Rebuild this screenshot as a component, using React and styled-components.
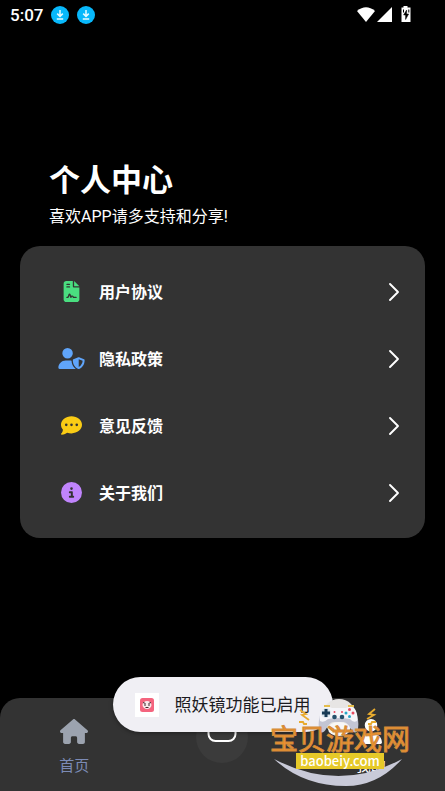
import styled, { createGlobalStyle } from "styled-components";
import {
  FaFileContract,
  FaUserShield,
  FaCommentDots,
  FaCircleInfo,
  FaHouse,
  FaUser,
} from "react-icons/fa6";

const items = [
  { label: "用户协议", icon: FaFileContract, color: "#4ade80" },
  { label: "隐私政策", icon: FaUserShield, color: "#60a5fa" },
  { label: "意见反馈", icon: FaCommentDots, color: "#facc15" },
  { label: "关于我们", icon: FaCircleInfo, color: "#c084fc" },
];

function DownloadIcon() {
  return (
    <svg width="18" height="18" viewBox="0 0 18 18">
      <circle cx="9" cy="9" r="9" fill="#08b8fb" />
      <path
        d="M9 4v6M6.2 7.6L9 10.4l2.8-2.8M5.8 13h6.4"
        fill="none"
        stroke="#e8faff"
        strokeWidth="1.5"
      />
    </svg>
  );
}

function StatusBar() {
  return (
    <Status>
      <div className="status__left">
        <span>5:07</span>
        <DownloadIcon />
        <DownloadIcon />
      </div>
      <svg width="54" height="18" viewBox="0 0 54 18">
        <g fill="white">
          <path d="M0 5Q9 -2.5 18 5L9 16z" />
          <path d="M35 1v15H20z" />
          <path d="M46.500 0h4v1.500h3V16h-9V1.500h2z" />
        </g>
        <path
          d="M49.600 4l-3 5h2v4.500l3-5.500h-2z"
          fill="black"
          stroke="black"
          strokeWidth="0.500"
        />
        <path d="M46.500 3.500v3M51.800 3.500v3" stroke="black" strokeWidth="1" />
      </svg>
    </Status>
  );
}

function Watermark() {
  return (
    <Mark aria-hidden="true">
      <svg width="140" height="90" viewBox="0 0 140 90">
        <circle cx="69" cy="19" r="17" fill="#e7e5e4" />
        <path
          d="M52 13C49 19 48 26 49 32C50 37 54 36 56 32Q59 26 63 25H74Q78 26 81 32C84 37 87 36 88 32C89 26 88 19 85 13z"
          fill="#c3c5d3"
        />
        <path
          d="M53 11Q57 8 62 11H76Q80 8 84 11C87 14 88 20 87 24Q83 26 80 22Q69 20 58 22Q54 26 50 24C49 20 50 14 53 11z"
          fill="#f5f5f9"
        />
        <ellipse cx="69" cy="32" rx="11" ry="7" fill="#f8f7f7" />
        <path d="M54 9h6M78 9h6" stroke="#e4bd4d" strokeWidth="2" />
        <circle cx="56" cy="16" r="5" fill="#d9e5ed" />
        <path d="M56 12v8M52 16h8" stroke="#173b55" strokeWidth="3" />
        <g fill="#24506b">
          <circle cx="64.500" cy="20" r="2.300" />
          <circle cx="72" cy="20" r="2.300" />
        </g>
        <g fill="#e74b61">
          <circle cx="64.500" cy="15" r="1" />
          <circle cx="72" cy="15" r="1" />
          <circle cx="83" cy="16" r="1.500" />
          <circle cx="79.500" cy="12.500" r="1.500" />
        </g>
        <g fill="#25a7c7">
          <circle cx="76" cy="16" r="1.500" />
          <circle cx="79.500" cy="19.500" r="1.500" />
        </g>
        <g fill="none" stroke="#e8ab2e" strokeWidth="1.800">
          <path d="M30 13l6 4-4 1 7 5M105 12l-6 5 5 1-7 4" />
          <path d="M29 25h4l1 2h3M106 25h-4l-1 2h-3" />
        </g>
        <path d="M4 62Q69 96 132 62Q108 89 76 89Q33 89 4 62z" fill="#c9cad8" />
      </svg>
      <MarkName>宝贝游戏网</MarkName>
      <MarkSite>baobeiy.com</MarkSite>
    </Mark>
  );
}

export default function App() {
  return (
    <>
      <GlobalStyle />
      <Page>
        <StatusBar />
        <Header>
          <h1>个人中心</h1>
          <p>喜欢APP请多支持和分享!</p>
        </Header>
        <Card>
          {items.map(({ label, icon: Icon, color }) => (
            <Row key={label} type="button">
              <RowIcon $color={color}>
                <Icon />
              </RowIcon>
              <span>{label}</span>
              <svg width="12" height="20" viewBox="0 0 12 20">
                <path
                  d="M2 2l8 8-8 8"
                  fill="none"
                  stroke="white"
                  strokeWidth="1.900"
                  strokeLinecap="round"
                  strokeLinejoin="round"
                />
              </svg>
            </Row>
          ))}
        </Card>
        <Tabs>
          <Tab href="#home" $color="#7c8bb5" $icon="#9ca3af">
            <FaHouse />
            <span>首页</span>
          </Tab>
          <Scan type="button" aria-label="scan">
            <svg width="30" height="30" viewBox="0 0 30 30">
              <rect
                x="1.500"
                y="2"
                width="27"
                height="17"
                rx="7"
                fill="none"
                stroke="white"
                strokeWidth="2"
              />
            </svg>
          </Scan>
          <Tab href="#mine" $color="white" $icon="white">
            <FaUser />
            <span>我的</span>
          </Tab>
        </Tabs>
        <Toast role="status">
          <svg width="24" height="24" viewBox="0 0 24 24">
            <path d="M0 0h24v24H0z" fill="white" />
            <rect x="5" y="5" width="14" height="14" rx="2.500" fill="#f4647e" />
            <ellipse cx="12" cy="12" rx="4.500" ry="4" fill="#f9e9ea" />
            <path
              d="M8 9.500l2.500 1M16 9.500l-2.500 1M9 12h2M13 12h2M10.500 14.500h3"
              stroke="#40272d"
              strokeWidth="1"
            />
          </svg>
          <span>照妖镜功能已启用</span>
        </Toast>
        <Watermark />
      </Page>
    </>
  );
}

const GlobalStyle = createGlobalStyle`
  * {
    box-sizing: border-box;
    margin: 0;
    padding: 0;
  }
  body {
    background-color: black;
    font-family: "Noto Sans CJK SC", sans-serif;
  }
  button {
    border: none;
    font: inherit;
    cursor: pointer;
  }
  svg {
    display: block;
    flex-shrink: 0;
  }
`;

const Page = styled.div`
  position: relative;
  display: flex;
  flex-direction: column;
  min-height: 100vh;
  color: white;
`;

const Status = styled.div`
  display: flex;
  justify-content: space-between;
  align-items: center;
  height: 30px;
  padding: 0 34px 0 10px;
  .status__left {
    display: flex;
    align-items: center;
    gap: 8px;
    font: 500 17px Roboto, sans-serif;
  }
`;

const Header = styled.header`
  padding: 126px 49px 15px;
  h1 {
    margin-bottom: 3px;
    font-size: 31px;
    line-height: 44px;
  }
  p {
    font-family: Roboto, "Noto Sans CJK SC", sans-serif;
    font-size: 16px;
    line-height: 28px;
  }
`;

const Card = styled.main`
  display: flex;
  flex-direction: column;
  margin: 0 20px 24px;
  padding: 12px 0;
  border-radius: 20px;
  background-color: #333333;
`;

const Row = styled.button`
  display: flex;
  align-items: center;
  gap: 12px;
  height: 67px;
  padding: 0 25px 0 36px;
  background: none;
  color: white;
  font-size: 16px;
  font-weight: 700;
  text-align: left;
  span {
    flex: 1;
    padding-bottom: 1px;
  }
`;

const RowIcon = styled.div`
  display: flex;
  justify-content: center;
  width: 31px;
  color: ${(props) => props.$color};
  svg {
    width: 27px;
    height: 21px;
  }
`;

const Tabs = styled.nav`
  display: grid;
  grid-template-columns: repeat(3, 1fr);
  justify-items: center;
  height: 93px;
  margin-top: auto;
  border-radius: 20px 20px 0 0;
  background-color: #333333;
`;

const Tab = styled.a`
  display: flex;
  flex-direction: column;
  align-items: center;
  gap: 10px;
  padding-top: 21px;
  color: ${(props) => props.$color};
  font-size: 15px;
  line-height: 22px;
  text-decoration: none;
  svg {
    width: 28px;
    height: 25px;
    color: ${(props) => props.$icon};
  }
`;

const Scan = styled.button`
  display: flex;
  align-items: center;
  justify-content: center;
  width: 52px;
  height: 52px;
  margin-top: 13px;
  border-radius: 50%;
  background-color: #3b3b3b;
`;

const Toast = styled.div`
  position: absolute;
  bottom: 59px;
  left: 50%;
  transform: translateX(-50%);
  display: flex;
  align-items: center;
  gap: 16px;
  height: 55px;
  padding: 0 22px;
  border-radius: 28px;
  background-color: #f0eff4;
  box-shadow: 0 1px 4px #00000066;
  color: #1c1b1f;
  font-size: 17px;
  white-space: nowrap;
  span {
    padding-bottom: 2px;
  }
`;

const Mark = styled.div`
  position: absolute;
  right: 35px;
  bottom: 4px;
  display: grid;
  justify-items: center;
  width: 140px;
  height: 90px;
  pointer-events: none;
  > * {
    grid-area: 1 / 1;
  }
`;

const MarkName = styled.span`
  margin-top: 26px;
  color: #f0922a;
  font-size: 28px;
  font-weight: 400;
  line-height: 30px;
  white-space: nowrap;
  -webkit-text-stroke: 1px #d08a3c;
`;

const MarkSite = styled.span`
  align-self: start;
  margin-top: 56px;
  padding: 0 4px;
  background-color: #e6c928;
  font-size: 13px;
  font-weight: 500;
  line-height: 16px;
`;
